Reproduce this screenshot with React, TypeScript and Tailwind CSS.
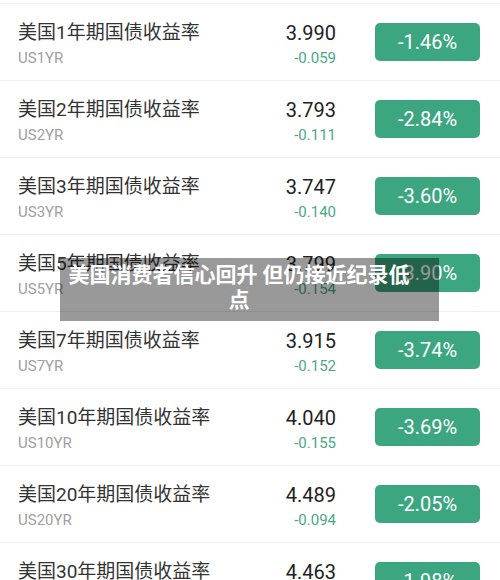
const rows = [
  { name: "美国1年期国债收益率", code: "US1YR", value: "3.990", change: "-0.059", pct: "-1.46%" },
  { name: "美国2年期国债收益率", code: "US2YR", value: "3.793", change: "-0.111", pct: "-2.84%" },
  { name: "美国3年期国债收益率", code: "US3YR", value: "3.747", change: "-0.140", pct: "-3.60%" },
  { name: "美国5年期国债收益率", code: "US5YR", value: "3.799", change: "-0.154", pct: "-3.90%" },
  { name: "美国7年期国债收益率", code: "US7YR", value: "3.915", change: "-0.152", pct: "-3.74%" },
  { name: "美国10年期国债收益率", code: "US10YR", value: "4.040", change: "-0.155", pct: "-3.69%" },
  { name: "美国20年期国债收益率", code: "US20YR", value: "4.489", change: "-0.094", pct: "-2.05%" },
  { name: "美国30年期国债收益率", code: "US30YR", value: "4.463", change: "-0.090", pct: "-1.98%" },
];

export default function App() {
  return (
    <div
      className="relative w-[500px] h-[580px] overflow-hidden bg-white pt-[3px]"
      style={{ fontFamily: 'Roboto, "Noto Sans CJK SC", sans-serif' }}
    >
      {rows.map((r) => (
        <div
          key={r.code}
          className="flex items-center h-[77px] border-t border-[#efefef] pl-[18px] pr-[20px]"
        >
          <div className="flex flex-col flex-1 mt-[6px]">
            <span className="text-[19px] leading-[26px] text-[#333]">{r.name}</span>
            <span className="text-[15px] leading-[24px] text-[#a0a0a0]">{r.code}</span>
          </div>
          <div className="flex flex-col items-end mt-[6px]">
            <span className="text-[20px] leading-[26px] text-[#222]">{r.value}</span>
            <span className="text-[15px] leading-[24px] text-[#4aa888]">{r.change}</span>
          </div>
          <div className="ml-[39px] w-[105px] h-[38px] rounded-[5px] bg-[#3ba67f] flex items-center justify-center text-white text-[20px]">
            {r.pct}
          </div>
        </div>
      ))}

      <div className="absolute left-[60px] top-[258px] w-[379px] bg-black/40 pl-[4px] pr-[25px] pt-[5px] pb-[8px] text-center text-white font-bold text-[21px] leading-[25px]">
        美国消费者信心回升 但仍接近纪录低点
      </div>
    </div>
  );
}
